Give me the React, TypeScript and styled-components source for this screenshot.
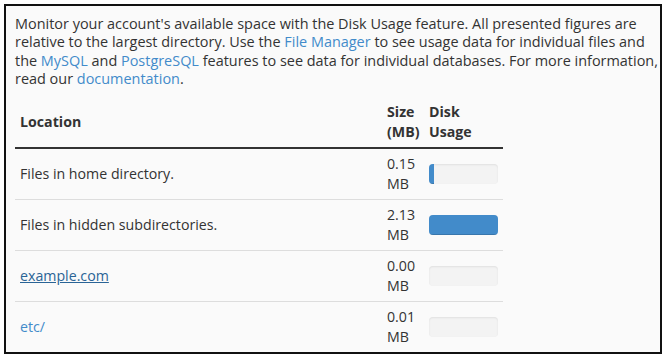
import * as React from "react";
import styled, { createGlobalStyle } from "styled-components";

const GlobalStyle = createGlobalStyle`
  html, body {
    margin: 0;
    padding: 0;
    background: #ffffff;
  }
  body {
    font-family: "Open Sans", "Liberation Sans", sans-serif;
    font-size: 14.2px;
    line-height: 20px;
    color: #333333;
  }
`;

const Frame = styled.div`
  margin: 4px;
  width: 658px;
  height: 350px;
  box-sizing: border-box;
  border: 2px solid #111111;
  background: #fafafa;
  overflow: hidden;
  padding: 9px 1px 0 9px;
`;

const Intro = styled.p`
  margin: 0 0 8px;
  font-size: 14.45px;
  line-height: 18.4px;
`;

const Link = styled.a<{ $visited?: boolean }>`
  color: ${p => (p.$visited ? "#2a6496" : "#428bca")};
  text-decoration: ${p => (p.$visited ? "underline" : "none")};
`;

const Table = styled.table`
  width: 488px;
  border-collapse: collapse;
  table-layout: fixed;
`;

const HeadCell = styled.th<{ $w?: number }>`
  text-align: left;
  font-weight: 700;
  padding: 5px;
  vertical-align: middle;
  border-bottom: 2px solid #333333;
  width: ${p => (p.$w ? `${p.$w}px` : "auto")};
`;

const Cell = styled.td`
  padding: 5px;
  vertical-align: middle;
  border-top: 1px solid #dddddd;
`;

const Progress = styled.div`
  height: 20px;
  width: 69px;
  border-radius: 4px;
  background: #f3f3f3;
  box-shadow: inset 0 1px 2px rgba(0, 0, 0, 0.08);
  overflow: hidden;
`;

const ProgressFill = styled.div`
  height: 100%;
  background: #428bca;
  box-shadow: inset 0 -1px 0 rgba(0, 0, 0, 0.15);
`;

type Row = { name: string; size: string; pct: number; link?: "plain" | "visited" };

const rows: Row[] = [
  { name: "Files in home directory.", size: "0.15", pct: 7 },
  { name: "Files in hidden subdirectories.", size: "2.13", pct: 100 },
  { name: "example.com", size: "0.00", pct: 0, link: "visited" },
  { name: "etc/", size: "0.01", pct: 0, link: "plain" },
];

export default function App() {
  return (
    <>
      <GlobalStyle />
      <Frame>
        <Intro>
          Monitor your account's available space with the Disk Usage feature. All presented figures are
          relative to the largest directory. Use the <Link href="#">File Manager</Link> to see usage data
          for individual files and the <Link href="#">MySQL</Link> and <Link href="#">PostgreSQL</Link>{" "}
          features to see data for individual databases. For more information, read our{" "}
          <Link href="#">documentation</Link>.
        </Intro>
        <Table>
          <thead>
            <tr>
              <HeadCell>Location</HeadCell>
              <HeadCell $w={32}>Size (MB)</HeadCell>
              <HeadCell $w={69}>Disk Usage</HeadCell>
            </tr>
          </thead>
          <tbody>
            {rows.map(r => (
              <tr key={r.name}>
                <Cell>
                  {r.link ? (
                    <Link href="#" $visited={r.link === "visited"}>
                      {r.name}
                    </Link>
                  ) : (
                    r.name
                  )}
                </Cell>
                <Cell>{r.size} MB</Cell>
                <Cell>
                  <Progress>
                    {r.pct > 0 && <ProgressFill style={{ width: `${r.pct}%` }} />}
                  </Progress>
                </Cell>
              </tr>
            ))}
          </tbody>
        </Table>
      </Frame>
    </>
  );
}
